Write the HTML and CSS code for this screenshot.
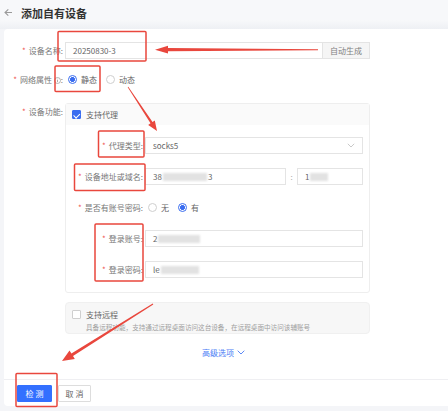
FILE: index.html
```html
<!DOCTYPE html>
<html lang="zh-CN">
<head>
    <meta charset="UTF-8">
    <meta name="viewport" content="width=device-width, initial-scale=1.0">
    <title>添加自有设备</title>
    <link rel="stylesheet" href="styles.css">
</head>
<body>
<div class="page">
    <header class="topbar">
        <svg class="back" width="9" height="9" viewBox="0 0 9 9"><path d="M8 4.5H1.2M4.3 1.3L1 4.5l3.3 3.2" fill="none" stroke="#9a9a9a" stroke-width="1.1"/></svg>
        <h1>添加自有设备</h1>
    </header>

    <main class="card">
        <div class="row row-name">
            <label class="lbl req">设备名称:</label>
            <div class="input-group">
                <div class="input">20250830-3</div>
                <button class="addon">自动生成</button>
            </div>
        </div>

        <div class="row row-net">
            <label class="lbl req">网络属性
                <svg class="info" width="7" height="7" viewBox="0 0 7 7"><circle cx="3.5" cy="3.5" r="3" fill="none" stroke="#999" stroke-width="0.7"/><path d="M3.5 3v2.2" stroke="#999" stroke-width="0.8"/><circle cx="3.5" cy="2" r="0.45" fill="#999"/></svg>:</label>
            <span class="radio on"></span><span class="radio-text">静态</span>
            <span class="radio"></span><span class="radio-text">动态</span>
        </div>

        <div class="row row-func">
            <label class="lbl req">设备功能:</label>
            <div class="proxy-box">
                <div class="proxy-head">
                    <span class="check on"></span><span>支持代理</span>
                </div>
                <div class="proxy-body">
                    <div class="row">
                        <label class="lbl-in req">代理类型:</label>
                        <div class="input select">socks5
                            <svg class="chev" width="8" height="5" viewBox="0 0 8 5"><path d="M0.8 0.8L4 4l3.2-3.2" fill="none" stroke="#bbb" stroke-width="0.8"/></svg>
                        </div>
                    </div>
                    <div class="row gap">
                        <label class="lbl-in req">设备地址或域名:</label>
                        <div class="input addr">38<span class="mask" style="width:44px"></span>3</div>
                        <span class="colon">:</span>
                        <div class="input port">1<span class="mask" style="width:18px"></span></div>
                    </div>
                    <div class="row gap">
                        <label class="lbl-in req">是否有账号密码:</label>
                        <span class="radio"></span><span class="radio-text">无</span>
                        <span class="radio on"></span><span class="radio-text">有</span>
                    </div>
                    <div class="row gap">
                        <label class="lbl-in req">登录账号:</label>
                        <div class="input wide">2<span class="mask" style="width:42px"></span></div>
                    </div>
                    <div class="row gap">
                        <label class="lbl-in req">登录密码:</label>
                        <div class="input wide">le<span class="mask" style="width:38px"></span></div>
                    </div>
                </div>
            </div>
        </div>

        <div class="remote-box">
            <span class="check"></span>
            <div class="remote-text">
                <div class="remote-title">支持远程</div>
                <div class="remote-desc">具备远程功能，支持通过远程桌面访问这台设备，在远程桌面中访问该辅账号</div>
            </div>
        </div>

        <div class="advanced">高级选项
            <svg width="8" height="5" viewBox="0 0 8 5"><path d="M0.7 0.7L4 4l3.3-3.3" fill="none" stroke="#4a7cf5" stroke-width="0.9"/></svg>
        </div>
    </main>

    <footer class="actions">
        <button class="btn primary">检 测</button>
        <button class="btn">取 消</button>
    </footer>

    <!-- 标注：红框与箭头 -->
    <svg class="marks" width="448" height="411" viewBox="0 0 448 411">
        <g fill="none" stroke="#e9473d" stroke-width="1.5">
            <rect x="58" y="31.5" width="88" height="29.5" rx="1"/>
            <rect x="55" y="66" width="45" height="25.5" rx="1"/>
            <rect x="98.5" y="131" width="45.5" height="26" rx="1"/>
            <rect x="74.5" y="164" width="70.5" height="26.5" rx="1"/>
            <rect x="95" y="224" width="48" height="57" rx="1"/>
            <rect x="16" y="373.5" width="41" height="33" rx="1"/>
        </g>
        <g fill="#e9473d">
            <polygon points="318,49.3 168,48.1 168,45.8 155,49.7 168,53.6 168,51.3 318,50.2"/>
            <polygon points="127.7,87.2 150.5,123.3 148.2,124.9 157,131 154.8,120.5 152.5,122 128.3,86.8"/>
            <polygon points="152.7,303.6 71.4,353.4 69.5,350.4 62,361 74.8,358.9 73,355.9 153.3,304.4"/>
        </g>
    </svg>
</div>
</body>
</html>
```

FILE: styles.css
```css
* {
    margin: 0;
    padding: 0;
    box-sizing: border-box;
}

body {
    background: #f4f5f8;
    font-family: "Noto Sans CJK SC", "Noto Sans", sans-serif;
    font-size: 8px;
    color: #777;
}

.page {
    position: relative;
    width: 448px;
    height: 411px;
    overflow: hidden;
}

.topbar {
    height: 29px;
    display: flex;
    align-items: center;
    padding: 0 0 4px 4px;
    gap: 8px;
    background: linear-gradient(#f7f8fa 70%, #eef0f4);
}

.topbar h1 {
    font-size: 11px;
    font-weight: bold;
    color: #333;
}

.card {
    margin-left: 4px;
    height: 350px;
    padding-top: 13px;
    background: #fff;
    border-radius: 4px 0 0 0;
}

.row {
    display: flex;
    align-items: center;
}

.lbl {
    width: 59px;
    margin-right: 2px;
    flex: none;
    text-align: right;
    white-space: nowrap;
    line-height: 17px;
}

.req::before {
    content: "*";
    color: #f0564f;
    margin-right: 3px;
}

.info {
    vertical-align: -0.5px;
}

.input {
    height: 17px;
    line-height: 15px;
    padding: 0 7px;
    border: 1px solid #e4e4e4;
    color: #666;
    background: #fff;
    display: flex;
    align-items: center;
}

.input-group {
    display: flex;
    width: 305px;
}

.input-group .input {
    width: 258px;
}

.addon {
    width: 47px;
    height: 17px;
    border: 1px solid #e4e4e4;
    border-left: none;
    background: #f5f5f5;
    font: inherit;
    color: #808080;
}

.row-net {
    margin-top: 12px;
    height: 17px;
}

.radio {
    width: 9px;
    height: 9px;
    border: 1px solid #cfcfcf;
    border-radius: 50%;
    margin: 0 4px 0 3px;
    background: #fff;
    flex: none;
}

.radio.on {
    border-color: #3a6df0;
    background: radial-gradient(circle, #3a6df0 2.2px, #fff 2.6px);
}

.radio-text {
    margin-right: 6px;
    color: #666;
}

.row-func {
    margin-top: 15px;
    align-items: flex-start;
}

.proxy-box {
    width: 305px;
    border: 1px solid #eee;
    border-radius: 3px;
}

.proxy-head {
    height: 21px;
    display: flex;
    align-items: center;
    gap: 5px;
    padding-left: 6px;
    background: #fafafa;
    color: #666;
}

.check {
    width: 9px;
    height: 9px;
    border: 1px solid #cfcfcf;
    border-radius: 1px;
    background: #fff;
    flex: none;
}

.check.on {
    border-color: #3a6df0;
    background: #3a6df0;
    position: relative;
}

.check.on::after {
    content: "";
    position: absolute;
    left: 2.2px;
    top: 0.5px;
    width: 2.5px;
    height: 4.5px;
    border: solid #fff;
    border-width: 0 1.2px 1.2px 0;
    transform: rotate(45deg);
}

.proxy-body {
    padding: 12px 6px 14px 0;
}

.proxy-body .gap {
    margin-top: 14px;
}

.lbl-in {
    width: 77px;
    margin-right: 2px;
    flex: none;
    text-align: right;
    white-space: nowrap;
    line-height: 17px;
}

.select,
.wide {
    width: 218px;
}

.select {
    justify-content: space-between;
}

.addr {
    width: 141px;
}

.colon {
    width: 11px;
    text-align: center;
    color: #aaa;
}

.port {
    width: 66px;
}

.mask {
    display: inline-block;
    height: 8px;
    margin: 0 1px;
    background: #e2e2e2;
    filter: blur(1px);
}

.remote-box {
    margin: 9px 0 0 61px;
    width: 305px;
    height: 32px;
    display: flex;
    align-items: flex-start;
    gap: 5px;
    padding: 7px 0 0 6px;
    background: #f7f7f7;
    border: 1px solid #f0f0f0;
    border-radius: 4px;
}

.remote-title {
    color: #666;
    line-height: 9px;
}

.remote-desc {
    margin-top: 3px;
    font-size: 6.6px;
    color: #a0a0a0;
    white-space: nowrap;
}

.advanced {
    margin: 13px 0 0 198px;
    display: flex;
    align-items: center;
    gap: 3px;
    color: #4a7cf5;
}

.actions {
    margin-left: 4px;
    height: 27px;
    display: flex;
    gap: 6px;
    padding: 5px 0 0 13px;
    background: #fff;
    border-top: 1px solid #efeff2;
    border-radius: 0 0 0 4px;
}

.btn {
    width: 33px;
    height: 17px;
    border: 1px solid #ddd;
    border-radius: 1px;
    background: #fff;
    font: inherit;
    color: #666;
}

.btn.primary {
    width: 35px;
    border-color: #3370ff;
    background: #3370ff;
    color: #fff;
}

.marks {
    position: absolute;
    top: 0;
    left: 0;
    pointer-events: none;
}
```
